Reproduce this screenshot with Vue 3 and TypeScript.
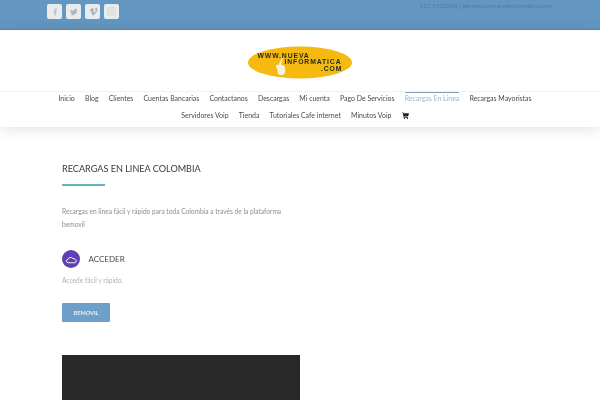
<script setup lang="ts">
const row1 = ['Inicio','Blog','Clientes','Cuentas Bancarias','Contactanos','Descargas','Mi cuenta','Pago De Servicios','Recargas En Linea','Recargas Mayoristas']
const row2 = ['Servidores Voip','Tienda','Tutoriales Cafe internet','Minutos Voip']
const active = 'Recargas En Linea'
const socials = ['f','t','v','i']
</script>

<template>
  <div class="page">
    <div class="topbar">
      <div class="socials">
        <span v-for="s in socials" :key="s" class="social">
          <svg v-if="s==='f'" viewBox="0 0 16 16" width="10" height="10"><path d="M9.2 14V8.6h1.700l.3-2H9.200V5.300c0-.6.2-1 1-1h1.100V2.500c-.3 0-.9-.1-1.600-.1-1.600 0-2.600 1-2.600 2.700v1.500H5.300v2h1.800V14z" fill="#b9bfc4"/></svg>
          <svg v-else-if="s==='t'" viewBox="0 0 16 16" width="10" height="10"><path d="M14 4.200c-.5.2-1 .4-1.500.4.500-.3.900-.8 1.100-1.400-.5.3-1 .5-1.600.6a2.500 2.500 0 0 0-4.300 2.300C5.600 6.500 3.800 5.500 2.600 4c-.7 1.100-.3 2.600.8 3.300-.4 0-.8-.1-1.100-.3 0 1.200.9 2.300 2 2.500-.4.100-.8.100-1.100 0 .3 1 1.200 1.700 2.300 1.700-1 .8-2.400 1.200-3.700 1 3.500 2.200 10.900 1 10.900-7 .5-.3.900-.6 1.300-1z" fill="#aeb6bd"/></svg>
          <svg v-else-if="s==='v'" viewBox="0 0 16 16" width="10" height="10"><path d="M15 4.800c-.1 1.300-1 3-2.700 5.200-1.800 2.300-3.300 3.400-4.500 3.400-.8 0-1.400-.7-1.900-2.100L4.800 7.500C4.400 6.100 4 5.400 3.600 5.400l-.9.600-.6-.7 2.600-2.600c.9-.8 1.600-1.100 2.200-1.200 1-.1 1.700.6 1.900 2.200.3 1.700.5 2.800.6 3.200.3 1.300.6 2 1 2 .3 0 .7-.5 1.300-1.400.6-.9.900-1.600.9-2.100.1-.8-.2-1.200-.9-1.200-.3 0-.7.100-1 .2.700-2.200 2-3.200 3.400-3.200 1 .1 1 1 .9 2.500z" fill="#aeb6bd"/></svg>
          <svg v-else viewBox="0 0 16 16" width="11" height="11" fill="none" stroke="#ced1d3" stroke-width="1.200"><rect x="2.500" y="2.500" width="11" height="11" rx="2.500"/><circle cx="8" cy="8" r="2.500"/><circle cx="11.300" cy="4.700" r=".5"/></svg>
        </span>
      </div>
      <div class="contact">317 5703242 | gerencia@nuevainformatica.com</div>
    </div>

    <header class="header">
      <div class="brand">
        <svg class="logo" viewBox="0 0 104 33" width="104" height="33">
          <ellipse cx="52" cy="16.500" rx="52" ry="16" fill="#f5b90f"/>
          <text x="9.500" y="11.500" class="logo-text">WWW.NUEVA</text>
          <text x="36.500" y="18.300" class="logo-text">INFORMATICA</text>
          <text x="73" y="25" class="logo-text">.COM</text>
          <path d="M35 12.500c-1-.8-2 0-1.800 1l-2.700 5.500c-1.500-.5-2.700-.3-2.600.8.900 2.300 1.400 4.300 1.800 6.700.3 2 2.200 3 4.200 2.500 2.500-.6 3.600-2.200 3.400-4.800l-.6-4.300-3.700-1.500z" fill="#f6f1e4"/>
        </svg>
      </div>
      <nav class="nav">
        <div class="nav-row">
          <a v-for="item in row1" :key="item" :class="['nav-item', { active: item === active }]">{{ item }}</a>
        </div>
        <div class="nav-row">
          <a v-for="item in row2" :key="item" class="nav-item">{{ item }}</a>
          <a class="nav-item cart">
            <svg viewBox="0 0 16 16" width="7" height="7"><path d="M0 1h3l.5 2H16l-2 7H5l.4 1.500H14V13H4L1.800 2.500H0z" fill="#222"/><circle cx="5.500" cy="14.700" r="1.300" fill="#222"/><circle cx="12.500" cy="14.700" r="1.300" fill="#222"/></svg>
          </a>
        </div>
      </nav>
    </header>

    <main class="main">
      <h1 class="title">RECARGAS EN LINEA COLOMBIA</h1>
      <div class="rule"></div>
      <p class="intro">Recargas en linea fácil y rápido para toda Colombia a través de la plataforma bemovil</p>
      <div class="feature">
        <span class="badge">
          <svg viewBox="0 0 18 12" width="13" height="9" fill="none" stroke="#fff" stroke-width="1.300"><path d="M4 10.500h9.500a2.300 2.300 0 0 0 .4-4.500 3.300 3.300 0 0 0-3.200-1.500A4 4 0 0 0 4 5.800a2.400 2.400 0 0 0 0 4.700z"/></svg>
        </span>
        <span class="feature-title">ACCEDER</span>
      </div>
      <p class="feature-text">Accede fácil y rápido.</p>
      <a class="button">BEMOVIL</a>
      <div class="video"></div>
    </main>
  </div>
</template>

<style>
html, body { margin: 0; padding: 0; overflow: hidden; background: #fff; }
</style>

<style scoped>
.page {
  width: 600px;
  height: 400px;
  overflow: hidden;
  background: #fff;
  font-family: Lato, "Open Sans", sans-serif;
  filter: blur(.35px);
}
.topbar {
  box-sizing: border-box;
  height: 30px;
  background: #6396c0;
  border-bottom: 1px solid #5d88ac;
  display: flex;
  justify-content: space-between;
  align-items: flex-start;
  padding: 4px 48px 0 47px;
}
.socials { display: flex; gap: 4px; }
.social {
  width: 15px;
  height: 15px;
  background: #e9eced;
  border-radius: 2px;
  display: flex;
  align-items: center;
  justify-content: center;
}
.contact {
  font-size: 6.300px;
  line-height: 4px;
  color: #557b9f;
}
.header {
  height: 97px;
  background: #fff;
  box-shadow: 0 2px 14px rgba(0, 0, 0, .12);
  position: relative;
}
.brand {
  box-sizing: border-box;
  height: 62px;
  border-bottom: 1px solid #f2f2f2;
  display: flex;
  justify-content: center;
  padding-top: 16px;
}
.logo { display: block; }
.logo-text {
  font-family: "Liberation Sans", sans-serif;
  font-weight: 700;
  font-size: 6.800px;
  letter-spacing: .9px;
  fill: #1c2a1c;
}
.nav { display: flex; flex-direction: column; align-items: center; padding-right: 10px; }
.nav-row {
  display: flex;
  justify-content: center;
  align-items: flex-start;
  gap: 10.200px;
  height: 17px;
}
.nav-item {
  font-size: 6.950px;
  line-height: 10px;
  padding-top: 1px;
  color: #4a4a4a;
  white-space: nowrap;
}
.nav-item.active {
  color: #9ab8d0;
  border-top: 1px solid #7f9fbc;
  padding-top: 0;
}
.cart { display: flex; align-items: center; height: 10px; }
.main { padding: 35px 0 0 62px; }
.title {
  margin: 0;
  font-size: 9.100px;
  line-height: 13px;
  font-weight: 400;
  color: #3a3a3a;
}
.rule {
  width: 43px;
  height: 2px;
  background: #63b4c4;
  margin-top: 9px;
}
.intro {
  width: 238px;
  margin: 19px 0 0;
  font-size: 6.620px;
  line-height: 12.500px;
  color: #888e94;
}
.feature {
  display: flex;
  align-items: center;
  gap: 8.500px;
  margin-top: 20px;
}
.badge {
  width: 18px;
  height: 18px;
  border-radius: 50%;
  background: #5f3fb4;
  display: flex;
  align-items: center;
  justify-content: center;
}
.feature-title {
  font-size: 8px;
  color: #4a4a4a;
}
.feature-text {
  margin: 6px 0 0;
  font-size: 6.600px;
  line-height: 12px;
  color: #aeb2b6;
}
.button {
  display: flex;
  align-items: center;
  justify-content: center;
  width: 48px;
  height: 19px;
  margin-top: 17px;
  background: #6d9fc9;
  border-radius: 1px;
  color: #e8f0f6;
  font-size: 5.600px;
  font-weight: 700;
}
.video {
  width: 238px;
  height: 60px;
  margin-top: 33px;
  background: #282828;
}
</style>
